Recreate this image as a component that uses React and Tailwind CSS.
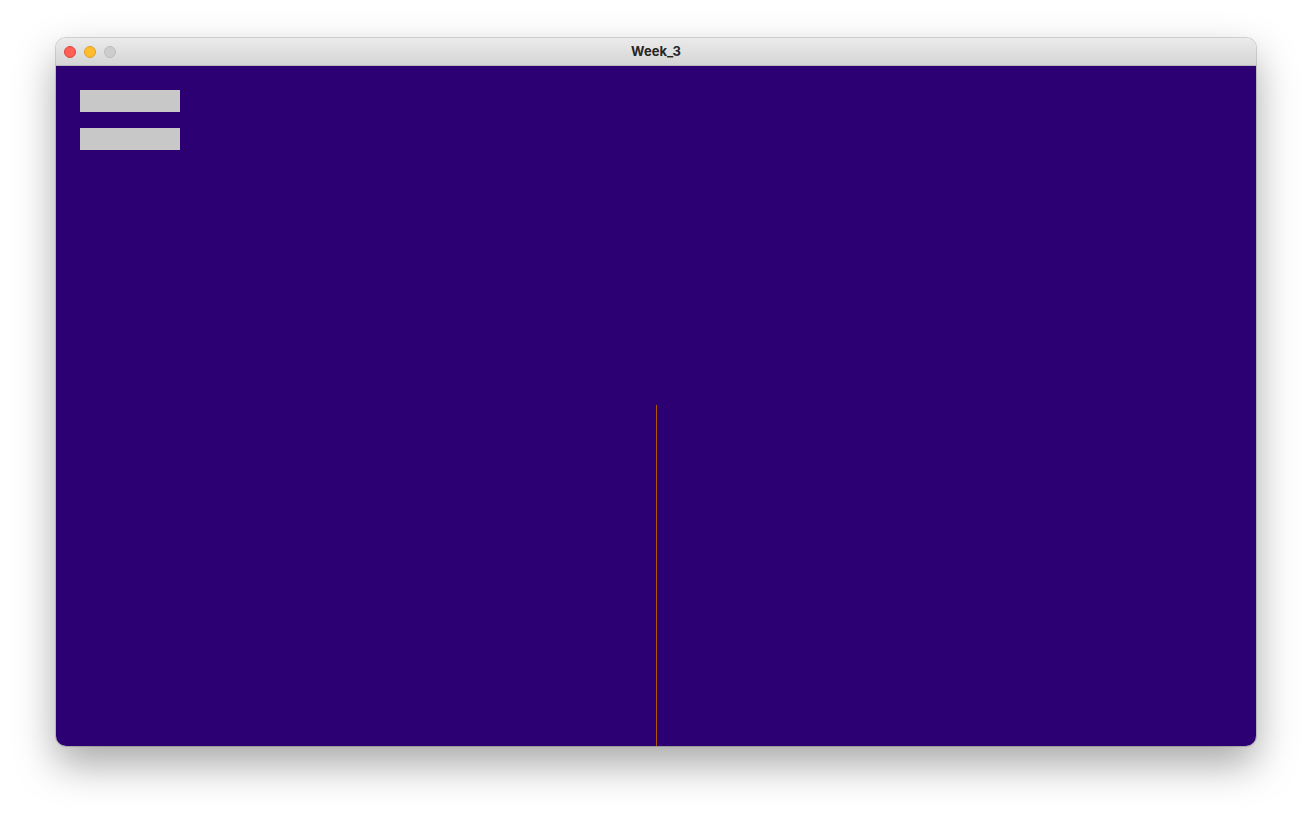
export default function App() {
  return (
    <div className="min-h-screen bg-white pt-[38px] pl-[56px]" style={{ fontFamily: 'Inter, "Liberation Sans", sans-serif' }}>
      <div className="w-[1200px] h-[708px] rounded-[10px] overflow-hidden flex flex-col shadow-[0_18px_40px_rgba(0,0,0,0.35)] ring-1 ring-black/15">
        {/* Title bar */}
        <div className="relative h-[28px] shrink-0 bg-gradient-to-b from-[#ebebeb] to-[#d5d5d5] border-b border-[#b8b8b8] flex items-center px-2 gap-2">
          <span className="w-3 h-3 rounded-full bg-[#fe5f57] border border-[#e0443e]" />
          <span className="w-3 h-3 rounded-full bg-[#febc2e] border border-[#dea123]" />
          <span className="w-3 h-3 rounded-full bg-[#cdcdcd] border border-[#bcbcbc]" />
          <div className="absolute inset-0 pt-px flex items-center justify-center text-[13px] font-bold text-[#262626]">
            Week_3
          </div>
        </div>

        {/* Sketch canvas */}
        <div className="relative flex-1 bg-[#2c0072] pt-6 pl-6 flex flex-col gap-4">
          <div className="w-[100px] h-[22px] bg-[#c8c8c8]" />
          <div className="w-[100px] h-[22px] bg-[#c8c8c8]" />
          <div className="absolute left-[600px] top-[339px] bottom-0 w-px bg-[#b05800]" />
        </div>
      </div>
    </div>
  )
}
